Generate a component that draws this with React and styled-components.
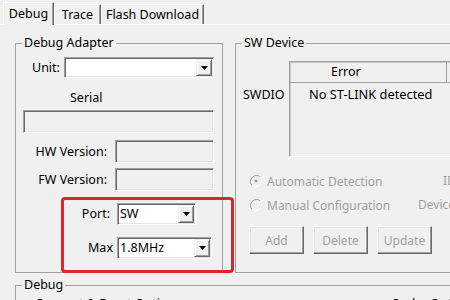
import React from 'react';
import styled, { createGlobalStyle } from 'styled-components';

const Global = createGlobalStyle`
  html, body { margin: 0; padding: 0; background: #f0f0f0; }
  body { font-family: "Noto Sans", "Open Sans", sans-serif; font-size: 12px; }
`;

const Window = styled.div`
  position: relative;
  width: 450px;
  height: 300px;
  overflow: hidden;
  background: #f0f0f0;
  color: #000;
  font-family: "Noto Sans", "Open Sans", sans-serif;
  font-size: 12.5px;
`;

const TabStrip = styled.div`
  display: flex;
  align-items: flex-end;
  height: 24px;
  padding-left: 3px;
  box-sizing: border-box;
`;

const Tab = styled.div`
  position: relative;
  z-index: ${p => (p.$active ? 2 : 1)};
  display: flex;
  align-items: center;
  justify-content: center;
  box-sizing: border-box;
  width: ${p => p.$w}px;
  height: ${p => (p.$active ? 23 : 20)}px;
  margin-bottom: ${p => (p.$active ? -1 : 0)}px;
  padding-bottom: ${p => (p.$active ? 2 : 0)}px;
  background: #f0f0f0;
  border-top: 1px solid #fff;
  border-left: 1px solid #fff;
  border-right: 1px solid #696969;
  box-shadow: inset -1px 0 #a0a0a0;
  white-space: nowrap;
`;

const Panel = styled.div`
  border-top: 1px solid #fff;
  padding: 10px 0 0 15px;
`;

const GroupRow = styled.div`
  display: flex;
  gap: 12px;
`;

const Group = styled.fieldset`
  margin: ${p => p.$mt || 0}px 0 0 ${p => p.$ml || 0}px;
  padding: 0;
  border: 1px solid #a0a0a0;
  width: ${p => p.$w}px;
  height: ${p => p.$h}px;
  box-sizing: border-box;
  flex-shrink: 0;
  min-width: 0;
`;

const Caption = styled.legend`
  margin-left: ${p => p.$ml ?? 6}px;
  padding: 0 2px;
  line-height: 16px;
  font-size: 12.5px;
  white-space: nowrap;
`;

const Row = styled.div`
  display: flex;
  align-items: center;
  height: ${p => p.$h || 16}px;
  margin-top: ${p => p.$mt || 0}px;
  padding-left: ${p => p.$pl || 0}px;
  gap: ${p => p.$gap || 0}px;
`;

const Label = styled.span`
  flex-shrink: 0;
  width: ${p => (p.$w ? `${p.$w}px` : 'auto')};
  text-align: ${p => p.$align || 'left'};
  line-height: 16px;
  white-space: nowrap;
  color: ${p => (p.$dim ? '#a0a0a0' : '#000')};
  font-size: ${p => (p.$dim ? '12px' : 'inherit')};
`;

const Sunken = styled.div`
  box-sizing: border-box;
  width: ${p => p.$w}px;
  height: ${p => p.$h}px;
  padding: 1px;
  border: 1px solid;
  border-color: #a0a0a0 #fff #fff #a0a0a0;
  box-shadow: inset 1px 1px #696969, inset -1px -1px #e3e3e3;
  background: ${p => (p.$white ? '#fff' : '#f0f0f0')};
  flex-shrink: 0;
`;

const Combo = styled(Sunken)`
  display: flex;
  align-items: stretch;
`;

const ComboValue = styled.span`
  flex: 1;
  display: flex;
  align-items: center;
  padding-left: 1px;
  line-height: 16px;
`;

const ComboButton = styled.span`
  width: 16px;
  box-sizing: border-box;
  display: flex;
  align-items: center;
  justify-content: center;
  background: #f0f0f0;
  border-top: 1px solid #f0f0f0;
  border-left: 1px solid #f0f0f0;
  border-right: 1px solid #696969;
  border-bottom: 1px solid #696969;
  box-shadow: inset 1px 1px #fff, inset -1px -1px #a0a0a0;
`;

const Arrow = () => (
  <svg width="7" height="4" viewBox="0 0 7 4">
    <path d="M0 0H7L3.5 4Z" fill="#000" />
  </svg>
);

const ComboBox = ({ w, h, value }) => (
  <Combo $w={w} $h={h} $white>
    <ComboValue>{value}</ComboValue>
    <ComboButton>
      <Arrow />
    </ComboButton>
  </Combo>
);

const TableRow = styled.div`
  display: flex;
  align-items: flex-start;
  margin-top: 10px;
  padding-left: 7px;
`;

const SideLabel = styled.span`
  width: 46px;
  flex-shrink: 0;
  margin-top: 26px;
  line-height: 16px;
`;

const Table = styled.div`
  box-sizing: border-box;
  width: 240px;
  height: 96px;
  flex-shrink: 0;
  border: 1px solid;
  border-color: #a0a0a0 #fff #fff #a0a0a0;
  box-shadow: inset 1px 1px #c8c8c8;
  background: #f0f0f0;
`;

const TableHead = styled.div`
  display: flex;
  height: 20px;
  border-bottom: 1px solid #a0a0a0;
`;

const HeadCell = styled.div`
  box-sizing: border-box;
  width: ${p => p.$w}px;
  padding-left: ${p => p.$pl || 0}px;
  line-height: 20px;
  border-right: 1px solid #a0a0a0;
`;

const Cell = styled.div`
  padding: 3px 0 0 19px;
  line-height: 16px;
  font-size: 12.8px;
  white-space: nowrap;
`;

const RadioOption = styled.span`
  display: flex;
  align-items: center;
  gap: 5px;
  width: ${p => p.$w}px;
  flex-shrink: 0;
  font-size: 12px;
  color: #a0a0a0;
  white-space: nowrap;
`;

const Radio = ({ checked }) => (
  <svg width="12" height="12" viewBox="0 0 12 12">
    <path d="M10.2 1.8A6 6 0 0 0 1.8 10.2" fill="none" stroke="#a0a0a0" strokeWidth="1" />
    <path d="M1.8 10.2A6 6 0 0 0 10.2 1.8" fill="none" stroke="#fff" strokeWidth="1" />
    <circle cx="6" cy="6" r="4.2" fill="#f0f0f0" />
    {checked && <circle cx="6" cy="6" r="1.6" fill="#a0a0a0" />}
  </svg>
);

const ButtonRow = styled.div`
  display: flex;
  gap: 9px;
  margin-top: 13px;
  padding-left: 13px;
`;

const Button = styled.button`
  box-sizing: border-box;
  width: 55px;
  height: 28px;
  padding: 0;
  font-family: inherit;
  font-size: 12px;
  color: #a0a0a0;
  background: #f0f0f0;
  border: 1px solid;
  border-color: #fff #696969 #696969 #fff;
  box-shadow: inset -1px -1px #a0a0a0, inset 1px 1px #e3e3e3;
`;

const InnerRow = styled.div`
  display: flex;
  gap: 12px;
  padding-left: 12px;
`;

const Highlight = styled.div`
  position: absolute;
  left: 61px;
  top: 197px;
  width: 173px;
  height: 76px;
  box-sizing: border-box;
  border: 3px solid #d8272d;
  border-radius: 4px;
  pointer-events: none;
`;

export default function App() {
  return (
    <Window>
      <Global />
      <TabStrip>
        <Tab $active $w={51}>Debug</Tab>
        <Tab $w={47}>Trace</Tab>
        <Tab $w={103}>Flash Download</Tab>
      </TabStrip>
      <Panel>
        <GroupRow>
          <Group $w={208} $h={238}>
            <Caption>Debug Adapter</Caption>
            <Row $h={21} $mt={6} $pl={16}>
              <Label $w={32}>Unit:</Label>
              <ComboBox w={150} h={21} value="" />
            </Row>
            <Row $mt={12} $pl={54}>
              <Label>Serial</Label>
            </Row>
            <Row $h={23} $mt={4} $pl={7}>
              <Sunken $w={191} $h={23} />
            </Row>
            <Row $h={23} $mt={7} $gap={8}>
              <Label $w={91} $align="right">HW Version:</Label>
              <Sunken $w={99} $h={23} />
            </Row>
            <Row $h={23} $mt={5} $gap={8}>
              <Label $w={91} $align="right">FW Version:</Label>
              <Sunken $w={99} $h={23} />
            </Row>
            <Row $h={22} $mt={12} $gap={7}>
              <Label $w={94} $align="right">Port:</Label>
              <ComboBox w={79} h={22} value="SW" />
            </Row>
            <Row $h={22} $mt={12} $gap={4}>
              <Label $w={97} $align="right">Max</Label>
              <ComboBox w={95} h={22} value="1.8MHz" />
            </Row>
          </Group>
          <Group $w={240} $h={238}>
            <Caption>SW Device</Caption>
            <TableRow>
              <SideLabel>SWDIO</SideLabel>
              <Table>
                <TableHead>
                  <HeadCell $w={157} $pl={41}>Error</HeadCell>
                  <HeadCell $w={60} />
                </TableHead>
                <Cell>No ST-LINK detected</Cell>
              </Table>
            </TableRow>
            <Row $mt={16} $pl={14}>
              <RadioOption $w={193}>
                <Radio checked />
                Automatic Detection
              </RadioOption>
              <Label $dim>IDCODE</Label>
            </Row>
            <Row $mt={8} $pl={14}>
              <RadioOption $w={168}>
                <Radio />
                Manual Configuration
              </RadioOption>
              <Label $dim>Device Name</Label>
            </Row>
            <ButtonRow>
              <Button disabled>Add</Button>
              <Button disabled>Delete</Button>
              <Button disabled>Update</Button>
            </ButtonRow>
          </Group>
        </GroupRow>
        <Group $w={460} $h={60} $mt={4}>
          <Caption>Debug</Caption>
          <InnerRow>
            <Group $w={344} $h={40} $mt={3}>
              <Caption $ml={4}>Connect &amp; Reset Options</Caption>
            </Group>
            <Group $w={120} $h={40} $mt={3}>
              <Caption $ml={4}>Cache Options</Caption>
            </Group>
          </InnerRow>
        </Group>
      </Panel>
      <Highlight />
    </Window>
  );
}
